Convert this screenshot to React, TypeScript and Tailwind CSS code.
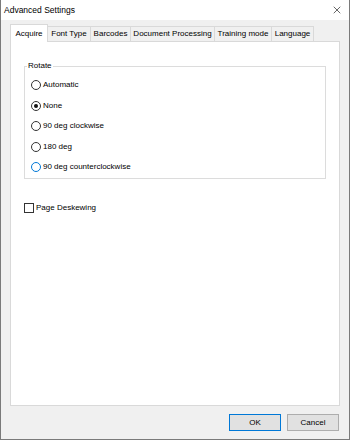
import { X } from 'lucide-react'

const tabs: [string, string][] = [
  ['Font Type', 'w-[43px]'],
  ['Barcodes', 'w-[40px]'],
  ['Document Processing', 'w-[84px]'],
  ['Training mode', 'w-[57px]'],
  ['Language', 'w-[42px]'],
]
const options = ['Automatic', 'None', '90 deg clockwise', '180 deg', '90 deg counterclockwise']

function Radio({ label, checked, hover }: { label: string; checked?: boolean; hover?: boolean }) {
  return (
    <label className="flex h-[12px] items-center gap-[2px]">
      <span
        className={
          'flex h-[10px] w-[10px] items-center justify-center rounded-full border bg-white ' +
          (hover ? 'border-[#0078d7]' : 'border-[#333]')
        }
      >
        {checked && <span className="h-[4px] w-[4px] rounded-full bg-[#111]" />}
      </span>
      <span>{label}</span>
    </label>
  )
}

export default function App() {
  return (
    <div
      className="flex h-[440px] w-[350px] flex-col border-x border-b border-[#7a7a7a] bg-[#f0f0f0] text-[8px] text-black"
      style={{ fontFamily: '"Liberation Sans", Arial, sans-serif' }}
    >
      <div className="flex h-[20px] items-center justify-between bg-white pl-[3px] pr-[6px] text-[8.5px]">
        <span>Advanced Settings</span>
        <X size={12} strokeWidth={1.2} />
      </div>

      <div className="flex flex-1 flex-col px-[9px] pt-[4px]">
        <div className="flex h-[17px] items-end whitespace-nowrap">
          <div className="z-10 -mb-px flex h-[18px] w-[38px] items-center justify-center border border-b-0 border-[#d9d9d9] bg-white">
            Acquire
          </div>
          {tabs.map(([t, w]) => (
            <div
              key={t}
              className={
                'flex h-[15px] items-center justify-center border border-b-0 border-l-0 border-[#d9d9d9] bg-[#f0f0f0] ' + w
              }
            >
              {t}
            </div>
          ))}
        </div>

        <div className="flex h-[365px] flex-col border border-[#d9d9d9] bg-white px-[13px] pt-[20px]">
          <fieldset className="h-[117px] border border-[#dcdcdc]">
            <legend className="ml-[2px] px-[1px] leading-none">Rotate</legend>
            <div className="flex flex-col gap-[8.5px] pl-[6px] pt-[9px]">
              {options.map((o, i) => (
                <Radio key={o} label={o} checked={i === 1} hover={i === 4} />
              ))}
            </div>
          </fieldset>

          <label className="mt-[23px] flex items-center gap-[2px]">
            <span className="h-[10px] w-[10px] border border-[#333] bg-white" />
            <span>Page Deskewing</span>
          </label>
        </div>

        <div className="flex flex-1 items-center justify-end gap-[6px] pr-[1px]">
          <button className="h-[17px] w-[52px] border border-[#0078d7] bg-[#e1e1e1]">OK</button>
          <button className="h-[17px] w-[52px] border border-[#adadad] bg-[#e1e1e1]">Cancel</button>
        </div>
      </div>
    </div>
  )
}
